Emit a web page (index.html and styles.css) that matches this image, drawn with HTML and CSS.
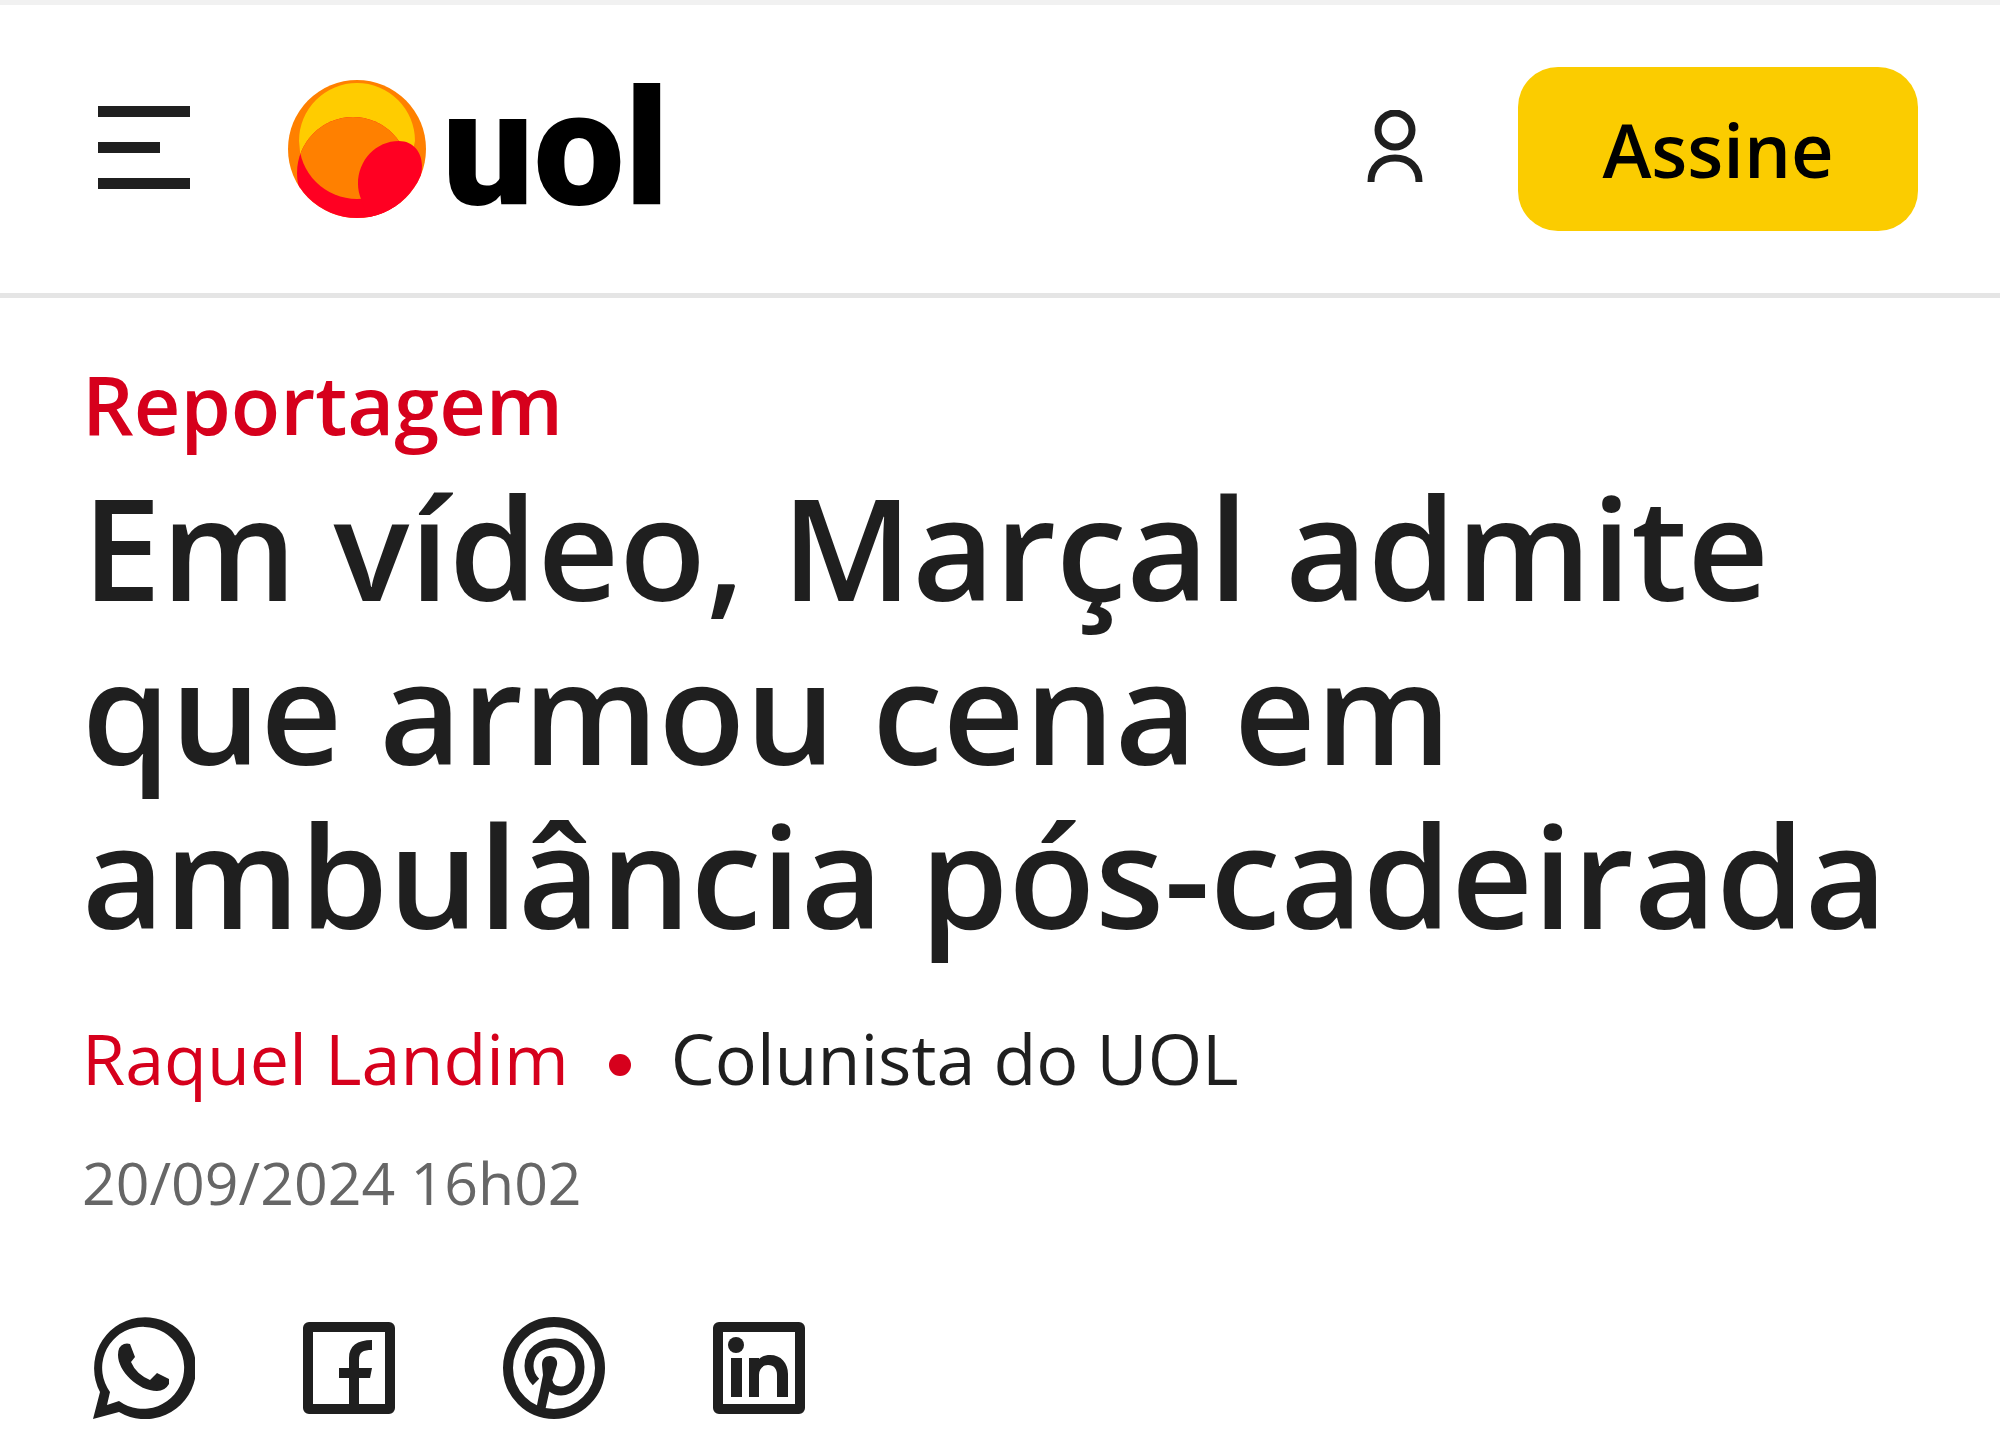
FILE: index.html
```
<!DOCTYPE html>
<html lang="pt-BR">
<head>
    <meta charset="UTF-8">
    <meta name="viewport" content="width=device-width, initial-scale=1.0">
    <title>Em vídeo, Marçal admite que armou cena em ambulância pós-cadeirada</title>
    <link rel="stylesheet" href="styles.css">
</head>
<body>
    <header class="header">
        <button class="menu-button" type="button" aria-label="Abrir menu">
            <span class="menu-line"></span>
            <span class="menu-line menu-line-short"></span>
            <span class="menu-line"></span>
        </button>

        <a class="logo" href="#">
            <svg class="logo-ball" viewBox="0 0 138 138" aria-hidden="true">
                <defs>
                    <clipPath id="ball"><circle cx="69" cy="69" r="69"/></clipPath>
                    <clipPath id="sun"><circle cx="69" cy="61" r="58"/></clipPath>
                </defs>
                <circle cx="69" cy="69" r="69" fill="#ff8000"/>
                <g clip-path="url(#ball)">
                    <path d="M11 61A58 58 0 0 1 127 61L120 93H14Z" fill="#ffcc00"/>
                    <circle cx="65" cy="93" r="56" fill="#ff0022"/>
                    <circle cx="65" cy="93" r="56" fill="#ff8000" clip-path="url(#sun)"/>
                    <path d="M111 61C125 61 134 72 134 86C134 118 106 138 80 138L73 119C71 114 70 109 70 104C70 80 88 61 111 61Z" fill="#ff0022"/>
                </g>
            </svg>
            <span class="logo-name">uol</span>
        </a>

        <a class="user-link" href="#" aria-label="Entrar">
            <svg class="user-icon" viewBox="0 0 56 72" aria-hidden="true">
                <circle cx="28" cy="20" r="17"/>
                <path d="M4 72C4 57 14 48 28 48C42 48 52 57 52 72"/>
            </svg>
        </a>
        <button class="subscribe-button" type="button">Assine</button>
    </header>

    <main class="article">
        <p class="kicker">Reportagem</p>
        <h1 class="title">Em vídeo, Marçal admite que armou cena em ambulância pós-cadeirada</h1>
        <div class="author">
            <a class="author-name" href="#">Raquel Landim</a>
            <span class="author-dot"></span>
            <span>Colunista do UOL</span>
        </div>
        <time class="date" datetime="2024-09-20T16:02">20/09/2024 16h02</time>

        <nav class="share" aria-label="Compartilhar">
            <a href="#" aria-label="WhatsApp">
                <svg class="share-icon" viewBox="0 0 102 102">
                    <path fill-rule="evenodd" d="M0 102L7 75A51 51 0 1 1 26 95ZM14 88L26 84A41 41 0 1 0 17 75Z"/>
                    <path d="M31 27Q34 26 37 27L42 40L38 45Q43 57 57 63L64 56L76 62V67Q72 74 64 74C45 74 25 54 25 38Q25 29 31 27Z"/>
                </svg>
            </a>
            <a href="#" aria-label="Facebook">
                <svg class="share-icon" viewBox="0 0 102 102">
                    <rect class="stroke" x="10" y="10" width="82" height="82" rx="1"/>
                    <path d="M51 92V61H41V51H51V41C51 29 59 23 74 23V33C65 33 61 35 61 43V51H74L72 61H61V92Z"/>
                </svg>
            </a>
            <a href="#" aria-label="Pinterest">
                <svg class="share-icon" viewBox="0 0 102 102">
                    <circle class="stroke" cx="51" cy="51" r="46"/>
                    <path class="stroke stroke-thin" d="M33 65C28 60 26 55 26 49C26 34 38 26 52 26C67 26 77 36 77 50C77 65 68 74 58 74C51 74 46 70 45 64"/>
                    <path d="M39 48C39 42 42 39 47 39C52 39 55 43 54 48L51 58L48 67L42 94L33 93L40 58Z"/>
                </svg>
            </a>
            <a href="#" aria-label="LinkedIn">
                <svg class="share-icon" viewBox="0 0 102 102">
                    <rect class="stroke" x="10" y="10" width="82" height="82" rx="1"/>
                    <circle cx="28" cy="28" r="8"/>
                    <path d="M23 41H34V80H23ZM41 41H51V42C54 39 58 38 62 38C73 38 80 46 80 57V80H69V58C69 52 66 48 60 48C55 48 51 52 51 58V80H41Z"/>
                </svg>
            </a>
        </nav>
    </main>
</body>
</html>
```
FILE: styles.css
```
:root {
    --color-text: #1f1f1f;
    --color-red: #d6001c;
    --color-yellow: #fbcc00;
    --color-muted: #666;
    --color-border: #e5e5e5;
}

* {
    box-sizing: border-box;
}

body {
    margin: 0;
    border-top: 5px solid #f1f1f1;
    background: #fff;
    color: var(--color-text);
    font-family: "Open Sans", "Noto Sans", sans-serif;
}

a {
    color: inherit;
    text-decoration: none;
}

button {
    border: 0;
    font-family: inherit;
    cursor: pointer;
}

.header {
    display: flex;
    align-items: center;
    padding: 62px 82px 62px 98px;
    border-bottom: 5px solid var(--color-border);
}

.menu-button {
    display: flex;
    flex-direction: column;
    gap: 25px;
    width: 92px;
    padding: 0 0 3px;
    background: none;
}

.menu-line {
    width: 100%;
    height: 11px;
    background: var(--color-text);
}

.menu-line-short {
    width: 62px;
}

.logo {
    display: flex;
    align-items: center;
    gap: 16px;
    margin-left: 98px;
}

.logo-ball {
    width: 138px;
    height: 138px;
}

.logo-name {
    color: #000;
    font-family: Roboto, sans-serif;
    font-size: 162px;
    font-weight: 900;
    line-height: 138px;
}

.user-link {
    margin-left: auto;
    margin-right: 95px;
}

.user-icon {
    display: block;
    width: 56px;
    height: 72px;
    margin-bottom: 6px;
    fill: none;
    stroke: var(--color-text);
    stroke-width: 7px;
}

.subscribe-button {
    width: 400px;
    height: 164px;
    padding: 0;
    border-radius: 40px;
    background: var(--color-yellow);
    color: #000;
    font-size: 74px;
    font-weight: 600;
}

.article {
    padding: 50px 82px 28px;
}

.kicker {
    margin: 0 0 4px;
    color: var(--color-red);
    font-size: 81px;
    font-weight: 600;
    line-height: 112px;
}

.title {
    margin: 0;
    font-size: 142px;
    font-weight: 600;
    line-height: 164px;
}

.author {
    display: flex;
    align-items: center;
    margin-top: 46px;
    font-size: 70px;
    line-height: 112px;
}

.author-name {
    color: var(--color-red);
}

.author-dot {
    width: 22px;
    height: 22px;
    margin: 14px 40px 0;
    border-radius: 50%;
    background: var(--color-red);
}

.date {
    display: block;
    margin-top: 12px;
    color: var(--color-muted);
    font-size: 59px;
    line-height: 112px;
}

.share {
    display: flex;
    gap: 103px;
    margin: 79px 0 0 11px;
}

.share-icon {
    display: block;
    width: 102px;
    height: 102px;
    fill: var(--color-text);
}

.share-icon .stroke {
    fill: none;
    stroke: var(--color-text);
    stroke-width: 10px;
    stroke-linejoin: round;
}

.share-icon .stroke-thin {
    stroke-width: 9px;
}
```
